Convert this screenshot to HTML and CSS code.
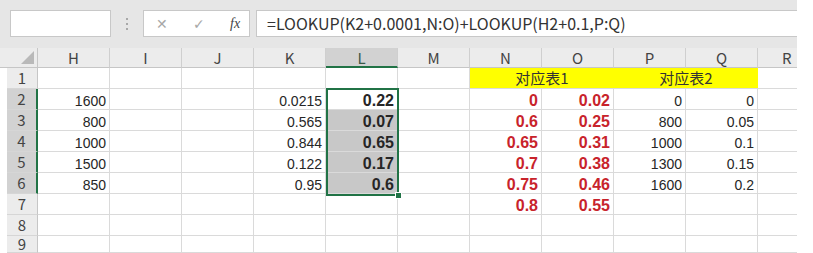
FILE: index.html
```html
<!doctype html>
<html lang="zh-CN">
<head>
    <meta charset="UTF-8">
    <title>LOOKUP 对应表</title>
    <link rel="stylesheet" href="styles.css">
</head>
<body>
<div class="wrap">
    <div class="toolbar">
        <div class="namebox"></div>
        <div class="grip"><i></i><i></i><i></i></div>
        <div class="fbtns">
            <span class="btn">&#x2715;</span>
            <span class="btn">&#x2713;</span>
            <span class="fx">fx</span>
        </div>
        <div class="finput">=LOOKUP(K2+0.0001,N:O)+LOOKUP(H2+0.1,P:Q)</div>
    </div>
    <div class="sheet">
        <!-- header -->
        <div class="corner"><b></b></div>
        <div class="ch">H</div><div class="ch">I</div><div class="ch">J</div><div class="ch">K</div>
        <div class="ch sel">L</div><div class="ch">M</div><div class="ch">N</div><div class="ch">O</div>
        <div class="ch">P</div><div class="ch">Q</div><div class="ch last">R</div>
        <!-- 1 -->
        <div class="rh">1</div>
        <div class="c"></div><div class="c"></div><div class="c"></div><div class="c"></div><div class="c"></div><div class="c"></div>
        <div class="c title">对应表1</div><div class="c title">对应表2</div><div class="c last"></div>
        <!-- 2 -->
        <div class="rh sel">2</div>
        <div class="c">1600</div><div class="c"></div><div class="c"></div><div class="c">0.0215</div>
        <div class="c b">0.22</div><div class="c"></div><div class="c b red">0</div><div class="c b red">0.02</div>
        <div class="c">0</div><div class="c">0</div><div class="c last"></div>
        <!-- 3 -->
        <div class="rh sel">3</div>
        <div class="c">800</div><div class="c"></div><div class="c"></div><div class="c">0.565</div>
        <div class="c b hl">0.07</div><div class="c"></div><div class="c b red">0.6</div><div class="c b red">0.25</div>
        <div class="c">800</div><div class="c">0.05</div><div class="c last"></div>
        <!-- 4 -->
        <div class="rh sel">4</div>
        <div class="c">1000</div><div class="c"></div><div class="c"></div><div class="c">0.844</div>
        <div class="c b hl">0.65</div><div class="c"></div><div class="c b red">0.65</div><div class="c b red">0.31</div>
        <div class="c">1000</div><div class="c">0.1</div><div class="c last"></div>
        <!-- 5 -->
        <div class="rh sel">5</div>
        <div class="c">1500</div><div class="c"></div><div class="c"></div><div class="c">0.122</div>
        <div class="c b hl">0.17</div><div class="c"></div><div class="c b red">0.7</div><div class="c b red">0.38</div>
        <div class="c">1300</div><div class="c">0.15</div><div class="c last"></div>
        <!-- 6 -->
        <div class="rh sel">6</div>
        <div class="c">850</div><div class="c"></div><div class="c"></div><div class="c">0.95</div>
        <div class="c b hl">0.6</div><div class="c"></div><div class="c b red">0.75</div><div class="c b red">0.46</div>
        <div class="c">1600</div><div class="c">0.2</div><div class="c last"></div>
        <!-- 7 -->
        <div class="rh">7</div>
        <div class="c"></div><div class="c"></div><div class="c"></div><div class="c"></div>
        <div class="c"></div><div class="c"></div><div class="c b red">0.8</div><div class="c b red">0.55</div>
        <div class="c"></div><div class="c"></div><div class="c last"></div>
        <!-- 8 -->
        <div class="rh">8</div>
        <div class="c"></div><div class="c"></div><div class="c"></div><div class="c"></div><div class="c"></div>
        <div class="c"></div><div class="c"></div><div class="c"></div><div class="c"></div><div class="c"></div><div class="c last"></div>
        <!-- 9 -->
        <div class="rh">9</div>
        <div class="c"></div><div class="c"></div><div class="c"></div><div class="c"></div><div class="c"></div>
        <div class="c"></div><div class="c"></div><div class="c"></div><div class="c"></div><div class="c"></div><div class="c last"></div>

        <div class="selbox"></div>
        <div class="handle"></div>
    </div>
</div>
</body>
</html>
```

FILE: styles.css
```css
*{
    margin: 0;
    padding: 0;
    box-sizing: border-box;
}
body{
    background: #fff;
    font-family: "Liberation Sans", Arial, sans-serif;
    color: #222;
}
.wrap{
    width: 797px;
}
/* formula bar */
.toolbar{
    height: 48px;
    background: #e6e6e6;
    display: flex;
    align-items: flex-start;
    padding: 10px 0 0 10px;
}
.namebox{
    width: 101px;
    height: 27px;
    background: #fff;
    border: 1px solid #c8c8c8;
}
.grip{
    width: 32px;
    height: 27px;
    display: flex;
    flex-direction: column;
    align-items: center;
    justify-content: center;
    gap: 3px;
}
.grip i{
    display: block;
    width: 2px;
    height: 2px;
    background: #a8a8a8;
}
.fbtns{
    width: 107px;
    height: 27px;
    background: #fff;
    border: 1px solid #c8c8c8;
    display: flex;
    align-items: center;
    padding-left: 12px;
}
.btn{
    width: 37px;
    font-size: 14px;
    color: #a8a8a8;
    font-family: "DejaVu Sans", sans-serif;
}
.fx{
    font-family: "Liberation Serif", serif;
    font-style: italic;
    font-size: 14px;
    color: #444;
}
.finput{
    flex: 1;
    margin-left: 6px;
    height: 27px;
    background: #fff;
    border: 1px solid #c8c8c8;
    border-right: 0;
    padding-left: 10px;
    font-family: "Noto Sans CJK SC", sans-serif;
    font-size: 16px;
    line-height: 25px;
    color: #333;
    white-space: nowrap;
    overflow: hidden;
}
/* grid */
.sheet{
    position: relative;
    display: grid;
    grid-template-columns: 38px repeat(10, 72px) 39px;
    grid-template-rows: 20px repeat(8, 21px) 17px;
    height: 205px;
    overflow: hidden;
}
.corner{
    background: #ececec;
    border-right: 1px solid #c6c6c6;
    border-bottom: 1px solid #c6c6c6;
    position: relative;
}
.corner b{
    position: absolute;
    right: 3px;
    bottom: 3px;
    width: 0;
    height: 0;
    border-left: 13px solid transparent;
    border-bottom: 13px solid #b9b9b9;
}
.ch{
    background: #ececec;
    border-right: 1px solid #cfcfcf;
    border-bottom: 1px solid #c6c6c6;
    text-align: center;
    font-family: "Noto Sans CJK SC", sans-serif;
    font-size: 15px;
    line-height: 19px;
    color: #444;
}
.ch.sel{
    background: #d2d2d2;
    border-bottom: 2px solid #217346;
    color: #3a5a48;
}
.ch.last{
    border-right: 0;
    text-align: left;
    padding-left: 24px;
}
.rh{
    margin-left: 7px;
    background: #ececec;
    border-right: 1px solid #c6c6c6;
    border-bottom: 1px solid #d6d6d6;
    display: flex;
    align-items: center;
    justify-content: center;
    font-family: "Noto Sans CJK SC", sans-serif;
    font-size: 15px;
    line-height: 18px;
    color: #444;
    overflow: hidden;
}
.rh.sel{
    background: #d2d2d2;
    border-right: 2px solid #217346;
}
.c{
    border-right: 1px solid #dadada;
    border-bottom: 1px solid #dadada;
    display: flex;
    align-items: flex-end;
    justify-content: flex-end;
    padding-right: 3px;
    font-size: 14px;
    line-height: 16px;
    color: #262626;
}
.c.last{
    border-right: 0;
}
.c.b{
    font-weight: bold;
    font-size: 16px;
}
.c.red{
    color: #c8232b;
}
.c.hl{
    background: #c8c8c8;
}
.c.title{
    grid-column: span 2;
    background: #ffff00;
    border-right: 0;
    justify-content: center;
    align-items: center;
    font-family: "Noto Sans CJK SC", sans-serif;
    font-size: 15px;
    line-height: 20px;
    color: #333;
    padding: 0;
}
.selbox{
    position: absolute;
    left: 326px;
    top: 40px;
    width: 73px;
    height: 108px;
    border: 2px solid #217346;
}
.handle{
    position: absolute;
    left: 395px;
    top: 144px;
    width: 7px;
    height: 7px;
    background: #217346;
    border: 1px solid #fff;
}
```
